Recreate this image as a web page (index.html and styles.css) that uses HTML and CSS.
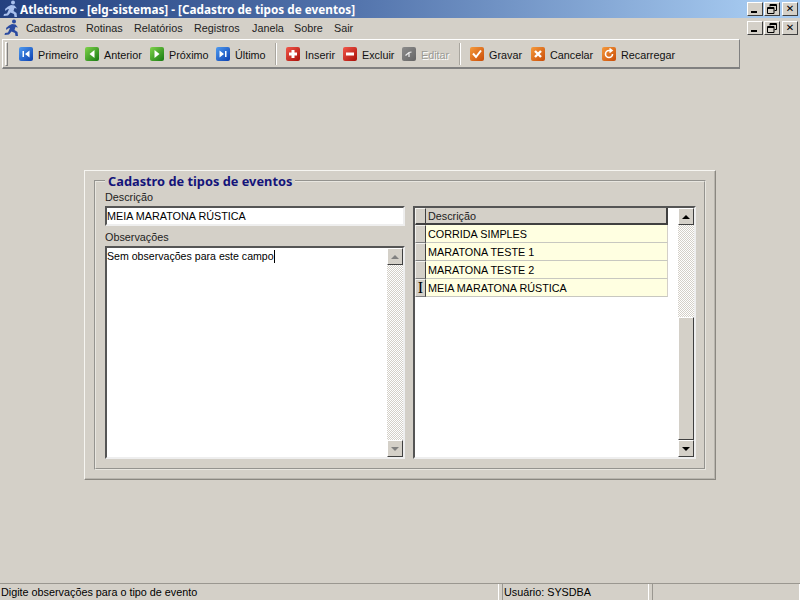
FILE: index.html
```html
<!DOCTYPE html>
<html lang="pt-BR">
<head>
  <meta charset="UTF-8" />
  <meta name="viewport" content="width=device-width, initial-scale=1.0" />
  <title>Atletismo</title>
  <link rel="stylesheet" href="styles.css">
</head>
<body>
  <svg class="defs" width="0" height="0">
    <symbol id="runner" viewBox="0 0 18 18">
      <circle cx="11" cy="2.500" r="2" fill="currentColor" />
      <path d="M9 5 L12.500 5.500 L15 8.500 L12.500 8 L11.500 11 L14.500 13 L15 17 L12.500 17 L12 14 L8.500 12.500 L6 15.500 L1.500 16 L2 14 L5 13.500 L7 9 L5 9.500 L3.500 11 L3 9 L6 6.500 Z" fill="currentColor" />
    </symbol>
    <symbol id="restore" viewBox="0 0 10 10">
      <path d="M3 .5h6.500v6H7.500M3 .5v2M3 1.500h6.500M.5 3.500h6.500v6H.5zM.5 4.500h6.500" stroke="#000" fill="none" />
    </symbol>
  </svg>

  <header class="titlebar">
    <svg class="runner"><use href="#runner" /></svg>
    <span class="title-text">Atletismo - [elg-sistemas] - [Cadastro de tipos de eventos]</span>
    <div class="win-buttons">
      <button class="win-btn"><span class="glyph-min"></span></button>
      <button class="win-btn"><svg class="glyph-restore"><use href="#restore" /></svg></button>
      <button class="win-btn close"><span class="glyph-close">✕</span></button>
    </div>
  </header>

  <nav class="menubar">
    <svg class="runner"><use href="#runner" /></svg>
    <a class="w49">Cadastros</a>
    <a class="w37">Rotinas</a>
    <a class="w49">Relatórios</a>
    <a class="w47">Registros</a>
    <a class="w31">Janela</a>
    <a class="w29">Sobre</a>
    <a class="w19">Sair</a>
    <div class="win-buttons">
      <button class="win-btn"><span class="glyph-min"></span></button>
      <button class="win-btn"><svg class="glyph-restore"><use href="#restore" /></svg></button>
      <button class="win-btn close"><span class="glyph-close">✕</span></button>
    </div>
  </nav>

  <div class="toolbar">
    <div class="grip"></div>
    <button class="tool t56"><span class="ico blue"><svg viewBox="0 0 14 14"><path d="M3.500 4h1.500v6H3.500zM10.500 3.500v7L6 7z" fill="#fff" /></svg></span>Primeiro</button>
    <button class="tool t55"><span class="ico green"><svg viewBox="0 0 14 14"><path d="M9.500 3v8L4.500 7z" fill="#fff" /></svg></span>Anterior</button>
    <button class="tool t56"><span class="ico green"><svg viewBox="0 0 14 14"><path d="M4.500 3v8l5-4z" fill="#fff" /></svg></span>Próximo</button>
    <button class="tool t49"><span class="ico blue"><svg viewBox="0 0 14 14"><path d="M3.500 3.500v7L8 7zM9 4h1.500v6H9z" fill="#fff" /></svg></span>Último</button>
    <div class="sep"></div>
    <button class="tool t47"><span class="ico red"><svg viewBox="0 0 14 14"><path d="M5.500 3h3v2.500H11v3H8.500V11h-3V8.500H3v-3h2.500z" fill="#fff" /></svg></span>Inserir</button>
    <button class="tool t50"><span class="ico red"><svg viewBox="0 0 14 14"><path d="M3 5.500h8v3H3z" fill="#fff" /></svg></span>Excluir</button>
    <button class="tool t47 disabled"><span class="ico grey"><svg viewBox="0 0 14 14"><path d="M3.500 8.500 7 5.500l2.500-.5M7 5.500V10" stroke="#eee" stroke-width="1.200" fill="none" /></svg></span>Editar</button>
    <div class="sep"></div>
    <button class="tool t51"><span class="ico orange"><svg viewBox="0 0 14 14"><path d="M3 6.500 6 10l5-6.500" stroke="#fff" stroke-width="2" fill="none" /></svg></span>Gravar</button>
    <button class="tool t61"><span class="ico orange"><svg viewBox="0 0 14 14"><path d="M4 4l6 6M10 4l-6 6" stroke="#fff" stroke-width="2.400" fill="none" /></svg></span>Cancelar</button>
    <button class="tool t72"><span class="ico orange"><svg viewBox="0 0 14 14"><path d="M10.500 7A3.500 3.500 0 1 1 7 3.500h2M7.500 1.500 10 3.500 7.500 5.500" stroke="#fff" stroke-width="1.600" fill="none" /></svg></span>Recarregar</button>
  </div>

  <main class="workspace">
    <section class="panel">
      <fieldset class="group">
        <legend>Cadastro de tipos de eventos</legend>
        <div class="columns">
          <div class="left">
            <label>Descrição</label>
            <div class="edit">MEIA MARATONA RÚSTICA</div>
            <label class="obs-label">Observações</label>
            <div class="memo">
              <div class="memo-text">Sem observações para este campo<span class="caret"></span></div>
              <div class="scroll">
                <div class="arrow-btn off"><span class="tri up"></span></div>
                <div class="track"></div>
                <div class="arrow-btn off"><span class="tri down"></span></div>
              </div>
            </div>
          </div>

          <div class="grid-box">
            <div class="grid">
              <div class="grid-row head"><div class="ind"></div><div class="cell">Descrição</div></div>
              <div class="grid-row"><div class="ind"></div><div class="cell">CORRIDA SIMPLES</div></div>
              <div class="grid-row"><div class="ind"></div><div class="cell">MARATONA TESTE 1</div></div>
              <div class="grid-row"><div class="ind"></div><div class="cell">MARATONA TESTE 2</div></div>
              <div class="grid-row"><div class="ind cur">I</div><div class="cell">MEIA MARATONA RÚSTICA</div></div>
            </div>
            <div class="scroll">
              <div class="arrow-btn"><span class="tri up"></span></div>
              <div class="track short"></div>
              <div class="thumb"></div>
              <div class="arrow-btn"><span class="tri down"></span></div>
            </div>
          </div>
        </div>
      </fieldset>
    </section>
  </main>

  <footer class="statusbar">
    <div class="stat first">Digite observações para o tipo de evento</div>
    <div class="stat second">Usuário: SYSDBA</div>
    <div class="stat third"></div>
  </footer>
</body>
</html>
```

FILE: styles.css
```css
* {
  box-sizing: border-box;
}

html, body {
  height: 100%;
}

body {
  margin: 0;
  display: flex;
  flex-direction: column;
  overflow: hidden;
  background-color: #d4d0c8;
  color: #000;
  font-family: "Liberation Sans", "Noto Sans", sans-serif;
  font-size: 10.800px;
}

.defs {
  position: absolute;
}

button {
  font: inherit;
  color: inherit;
  padding: 0;
  background: none;
  border: none;
}

/* title bar */
.titlebar {
  height: 18px;
  display: flex;
  align-items: center;
  padding-left: 2px;
  background: linear-gradient(90deg, #23407f 0%, #5475ad 45%, #a6caf0 95%);
  color: #fff;
  font-family: "Noto Sans", sans-serif;
  font-weight: bold;
  font-size: 11.750px;
}

.runner {
  width: 18px;
  height: 18px;
  flex: none;
  color: #2a4aa0;
}

.titlebar .runner {
  color: #a9c1ee;
}

.title-text {
  white-space: nowrap;
}

.win-buttons {
  margin-left: auto;
  display: flex;
  padding-right: 2px;
}

.win-btn {
  width: 16px;
  height: 14px;
  margin-left: 1px;
  display: flex;
  align-items: center;
  justify-content: center;
  background-color: #d4d0c8;
  color: #000;
  border-style: solid;
  border-width: 1px;
  border-color: #fff #404040 #404040 #fff;
}

.win-btn.close {
  margin-left: 2px;
}

.glyph-min {
  width: 6px;
  height: 2px;
  margin-top: 6px;
  margin-right: 2px;
  background-color: #000;
}

.glyph-restore {
  width: 10px;
  height: 10px;
}

.glyph-close {
  font-family: "DejaVu Sans", sans-serif;
  font-size: 10px;
  font-weight: bold;
  line-height: 10px;
}

/* menu */
.menubar {
  height: 20px;
  display: flex;
  align-items: center;
  padding-left: 3px;
}

.menubar a {
  flex: none;
  margin-right: 11px;
  color: #222;
  white-space: nowrap;
}

.menubar .runner {
  margin-right: 5px;
}

.w19 { width: 19px; }
.w29 { width: 29px; }
.w31 { width: 31px; }
.w37 { width: 37px; }
.w47 { width: 47px; }
.w49 { width: 49px; }

/* toolbar */
.toolbar {
  width: 738px;
  height: 30px;
  margin: 1px 0 0 2px;
  display: flex;
  align-items: center;
  padding: 2px 0 0 2px;
  border-style: solid;
  border-width: 1px 1px 2px 1px;
  border-color: #fff #808080 #808080 #fff;
}

.grip {
  width: 3px;
  height: 24px;
  margin: -2px 11px 0 0;
  border-style: solid;
  border-width: 1px;
  border-color: #fff #808080 #808080 #fff;
}

.tool {
  flex: none;
  display: flex;
  align-items: center;
  gap: 5px;
  margin-right: 10px;
  color: #111;
  white-space: nowrap;
  text-align: left;
}

.t47 { width: 47px; }
.t49 { width: 49px; }
.t50 { width: 50px; margin-right: 9px; }
.t51 { width: 51px; }
.t55 { width: 55px; }
.t56 { width: 56px; }
.t61 { width: 61px; }
.t72 { width: 72px; }

.tool.disabled {
  color: #9a9a94;
  text-shadow: 1px 1px 0 #fff;
}

.ico {
  width: 14px;
  height: 14px;
  flex: none;
  margin-bottom: 2px;
  border-radius: 2px;
}

.ico svg {
  display: block;
  width: 14px;
  height: 14px;
}

.blue { background: linear-gradient(135deg, #4f9bf0, #0b3fb0); }
.green { background: linear-gradient(135deg, #7fd34a, #177a12); }
.red { background: linear-gradient(135deg, #f2574a, #a90f08); }
.grey { background: linear-gradient(135deg, #8c8c8c, #656565); }
.orange { background: linear-gradient(135deg, #f59a3c, #c94c08); }

.sep {
  width: 2px;
  height: 22px;
  flex: none;
  margin: -2px 9px 0 0;
  border-left: 1px solid #a9a69f;
  border-right: 1px solid #fff;
}

/* workspace */
.workspace {
  flex: 1;
  display: flex;
  align-items: center;
  justify-content: center;
  padding-bottom: 2px;
}

.panel {
  width: 632px;
  height: 310px;
  padding: 3px 9px 9px 9px;
  border-style: solid;
  border-width: 1px;
  border-color: #f6f5f1 #8a8780 #8a8780 #f6f5f1;
  box-shadow: inset -1px -1px 0 #b8b5ae;
}

.group {
  height: 100%;
  margin: 0;
  padding: 2px 8px 9px 9px;
  border: 2px groove #e8e6e0;
}

.group legend {
  padding: 0 3px;
  color: #14147a;
  font-family: "Noto Sans", sans-serif;
  font-weight: bold;
  font-size: 12.800px;
  line-height: 14px;
}

.columns {
  height: 100%;
  display: flex;
  gap: 8px;
}

.left {
  width: 300px;
  display: flex;
  flex-direction: column;
}

.left label {
  height: 14px;
  line-height: 14px;
  color: #222;
}

.left .obs-label {
  margin-top: 4px;
}

.edit, .memo, .grid-box {
  background-color: #fff;
  border-style: solid;
  border-width: 2px;
  border-color: #555 #eee #eee #555;
}

.edit {
  height: 20px;
  line-height: 16px;
  margin-top: 2px;
}

.memo {
  flex: 1;
  display: flex;
  margin-top: 2px;
}

.memo-text {
  flex: 1;
  line-height: 14px;
  padding-top: 1px;
  font-size: 10.600px;
}

.caret {
  display: inline-block;
  width: 1px;
  height: 13px;
  background-color: #000;
  vertical-align: top;
  margin-top: 1px;
}

.scroll {
  width: 16px;
  flex: none;
  display: flex;
  flex-direction: column;
}

.track {
  flex: 1;
  background: repeating-conic-gradient(#d4d0c8 0 25%, #fff 0 50%) 0 0 / 2px 2px;
}

.track.short {
  flex: 0 0 92px;
}

.thumb {
  flex: 1;
  background-color: #d4d0c8;
  border-style: solid;
  border-width: 1px;
  border-color: #fff #404040 #404040 #fff;
}

.arrow-btn {
  height: 17px;
  flex: none;
  display: flex;
  align-items: center;
  justify-content: center;
  background-color: #d4d0c8;
  border-style: solid;
  border-width: 1px;
  border-color: #fff #404040 #404040 #fff;
}

.tri {
  width: 0;
  height: 0;
  border-left: 4px solid transparent;
  border-right: 4px solid transparent;
}

.tri.up {
  border-bottom: 4px solid #000;
}

.tri.down {
  border-top: 4px solid #000;
}

.off .tri.up {
  border-bottom-color: #808080;
}

.off .tri.down {
  border-top-color: #808080;
}

/* grid */
.grid-box {
  width: 283px;
  margin-top: 16px;
  display: flex;
  justify-content: space-between;
  align-items: stretch;
}

.grid {
  width: 253px;
}

.grid-row {
  height: 18px;
  display: flex;
}

.grid-row.head {
  height: 17px;
}

.ind {
  width: 11px;
  flex: none;
  background-color: #d4d0c8;
  border-style: solid;
  border-width: 1px;
  border-color: #f4f3ef #404040 #808080 #f4f3ef;
  text-align: center;
  font-family: "Liberation Serif", serif;
  font-size: 16px;
  line-height: 16px;
}

.cell {
  flex: 1;
  padding: 1px 0 0 2px;
  line-height: 16px;
  background-color: #ffffe1;
  border-bottom: 1px solid #c8c8c0;
  border-right: 1px solid #d4d0c8;
  white-space: nowrap;
}

.head .cell {
  background-color: #d4d0c8;
  line-height: 14px;
  border-bottom: 2px solid #404040;
  border-right: 2px solid #404040;
  color: #222;
}

.head .ind {
  border-bottom: 2px solid #404040;
}

/* status bar */
.statusbar {
  height: 17px;
  display: flex;
  gap: 3px;
  border-top: 1px solid #9a9790;
}

.stat {
  line-height: 17px;
  padding-left: 1px;
  border-right: 1px solid #fff;
  border-left: 1px solid #9a9790;
  white-space: nowrap;
}

.first {
  width: 499px;
  border-left: none;
}

.second {
  width: 147px;
}

.third {
  flex: 1;
}
```
